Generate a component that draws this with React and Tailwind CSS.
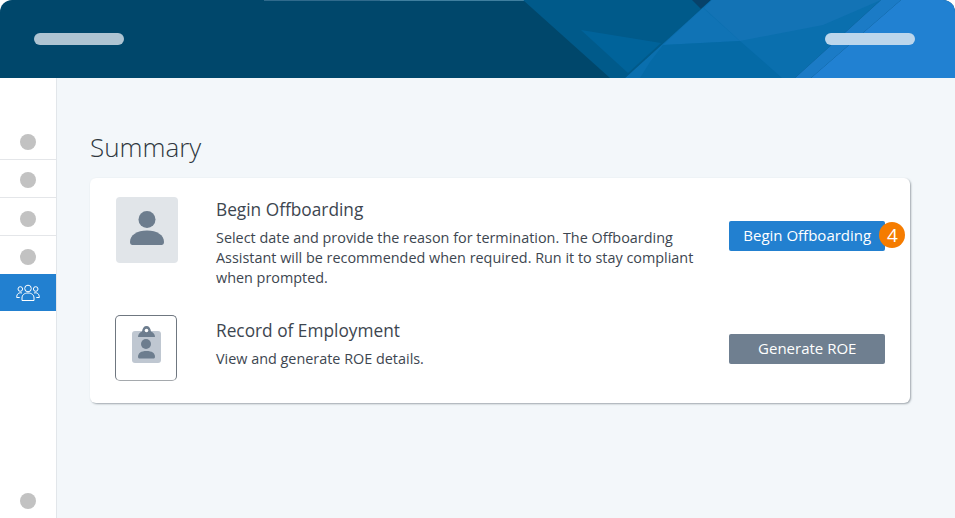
function HeaderArt() {
  return (
    <svg className="absolute inset-0 h-full w-full" viewBox="0 0 955 78" aria-hidden="true">
      <rect x="264" y="0" width="116" height="1" fill="#2f6a8c" />
      <rect x="380" y="0" width="143" height="1" fill="#3f7f9f" />
      <rect x="523" y="0" width="107" height="1" fill="#5593b0" />
      <polygon points="523,0 711,0 625,78 610,78" fill="#005a8a" />
      <polygon points="692,0 711,0 701,9" fill="#07426a" />
      <polygon points="581,30 661,43 628,73" fill="#00639a" />
      <polygon points="711,0 881,0 795,78 625,78" fill="#0a6fae" />
      <polygon points="703,8 740,41 663,45" fill="#1073b5" />
      <polygon points="663,45 740,41 773,70 782,78 640,78 650,62" fill="#056aa6" />
      <polygon points="704,8 712,0 881,0 823,25 740,41" fill="#1373b5" />
      <polygon points="881,0 901,0 811,78 795,78" fill="#1b7bc6" />
      <polygon points="901,0 955,0 955,78 811,78" fill="#2181d2" />
    </svg>
  );
}

function PersonIcon() {
  return (
    <svg width="62" height="66" viewBox="0 0 62 66" aria-hidden="true">
      <circle cx="31" cy="22.5" r="8.5" fill="#6d7d8e" />
      <path d="M14 45c0-7 7-11.500 17-11.500S48 38 48 45c0 2-1 3-2.500 3h-29C15 48 14 47 14 45z" fill="#6d7d8e" />
    </svg>
  );
}

function ClipboardIcon() {
  return (
    <svg width="60" height="64" viewBox="0 0 60 64" aria-hidden="true">
      <rect x="16" y="15" width="29" height="32" rx="3" fill="#bfc7d1" />
      <path d="M22 21c0-3 2-4.500 4-5.500.5-3.500 2-5.500 4.500-5.500s4 2 4.500 5.500c2 1 4 2.500 4 5.500z" fill="#6d7d8e" />
      <circle cx="30.500" cy="14.500" r="1.800" fill="#ffffff" />
      <circle cx="30" cy="28" r="5" fill="#6d7d8e" />
      <path d="M22 41c0-4 3-6 8.500-6S39 37 39 41c0 .8-.6 1.500-1.500 1.500h-14C22.600 42.500 22 41.800 22 41z" fill="#6d7d8e" />
    </svg>
  );
}

function GroupIcon() {
  return (
    <svg width="24" height="18" viewBox="0 0 24 18" fill="none" stroke="#ffffff" strokeWidth="1" aria-hidden="true">
      <circle cx="12" cy="4.500" r="3.300" />
      <circle cx="4.300" cy="5" r="2.300" />
      <circle cx="19.700" cy="5" r="2.300" />
      <path d="M6 16.500v-2.500c0-3 2.200-5 6-5s6 2 6 5v2.500z" />
      <path d="M6 9c-3-.8-5.300.6-5.300 4.500h3" />
      <path d="M18 9c3-.8 5.300.6 5.300 4.500h-3" />
    </svg>
  );
}

const rows = [
  "h-[37px] border-b pt-[2px]",
  "h-[38px] border-b pt-[2px]",
  "h-[38px] border-b pt-[4px]",
  "h-[38px] pt-[4px]",
];

export default function App() {
  return (
    <div className="flex h-[518px] w-[955px] flex-col overflow-hidden bg-white font-['Open_Sans',sans-serif] text-[#3d4650]">
      <header className="relative flex h-[78px] shrink-0 items-center justify-between overflow-hidden rounded-t-[12px] bg-[#00476b] pl-[34px] pr-[40px]">
        <HeaderArt />
        <div className="relative h-3 w-[90px] rounded-full bg-[#aec4d2]" />
        <div className="relative h-3 w-[90px] rounded-full bg-[#bcd6ec]" />
      </header>

      <div className="flex min-h-0 flex-1">
        <aside className="flex w-[57px] shrink-0 flex-col border-r border-[#e2e6ea] bg-white pt-[45px]">
          {rows.map((row, i) => (
            <div key={i} className={`flex items-center justify-center border-[#e4e6e9] ${row}`}>
              <span className="h-4 w-4 rounded-full bg-[#c2c2c2]" />
            </div>
          ))}
          <div className="flex h-[37px] items-center justify-center bg-[#2280d0]">
            <GroupIcon />
          </div>
          <div className="mt-auto flex justify-center pb-[9px]">
            <span className="h-4 w-4 rounded-full bg-[#c2c2c2]" />
          </div>
        </aside>

        <main className="min-w-0 flex-1 bg-[#f3f7fa] pl-[33px] pr-[45px] pt-[51px]">
          <h1 className="text-[26px] font-light leading-[36px] text-[#2f3740]">Summary</h1>
          <section className="mt-[13px] h-[225px] rounded-md bg-white pl-[26px] pr-[25px] pt-[19px] shadow-[1px_1px_2px_rgba(90,100,110,0.55)]">
            <div className="flex">
              <div className="flex h-[66px] w-[62px] shrink-0 items-center justify-center rounded bg-[#e1e5e9]">
                <PersonIcon />
              </div>
              <div className="ml-[38px] w-[490px]">
                <h2 className="mt-px text-[17.3px] leading-6">Begin Offboarding</h2>
                <p className="mt-[6px] text-[14.4px] leading-5">
                  Select date and provide the reason for termination. The Offboarding Assistant will be recommended when required. Run it to stay compliant when prompted.
                </p>
              </div>
              <div className="relative ml-[25px] mt-6 h-[30px] w-[156px]">
                <button className="h-full w-full rounded-[2px] bg-[#2280d0] pb-[2px] text-[15px] text-white">Begin Offboarding</button>
                <span className="absolute left-[150px] top-px flex h-[26px] w-[26px] items-center justify-center rounded-full bg-[#f57c00] text-[19px] text-white">4</span>
              </div>
            </div>
            <div className="mt-[27px] flex">
              <div className="-ml-px flex h-[66px] w-[62px] shrink-0 items-center justify-center rounded-[5px] border border-[#6f7780] border-b-[#a5a9ad] bg-white">
                <ClipboardIcon />
              </div>
              <div className="ml-[39px] w-[490px]">
                <h2 className="mt-[4px] text-[17.3px] leading-6">Record of Employment</h2>
                <p className="mt-[6px] text-[14.4px] leading-5">View and generate ROE details.</p>
              </div>
              <button className="ml-[25px] mt-[19px] h-[30px] w-[156px] rounded-[2px] bg-[#6f7f90] pb-[2px] text-[15px] text-white">Generate ROE</button>
            </div>
          </section>
        </main>
      </div>
    </div>
  );
}
